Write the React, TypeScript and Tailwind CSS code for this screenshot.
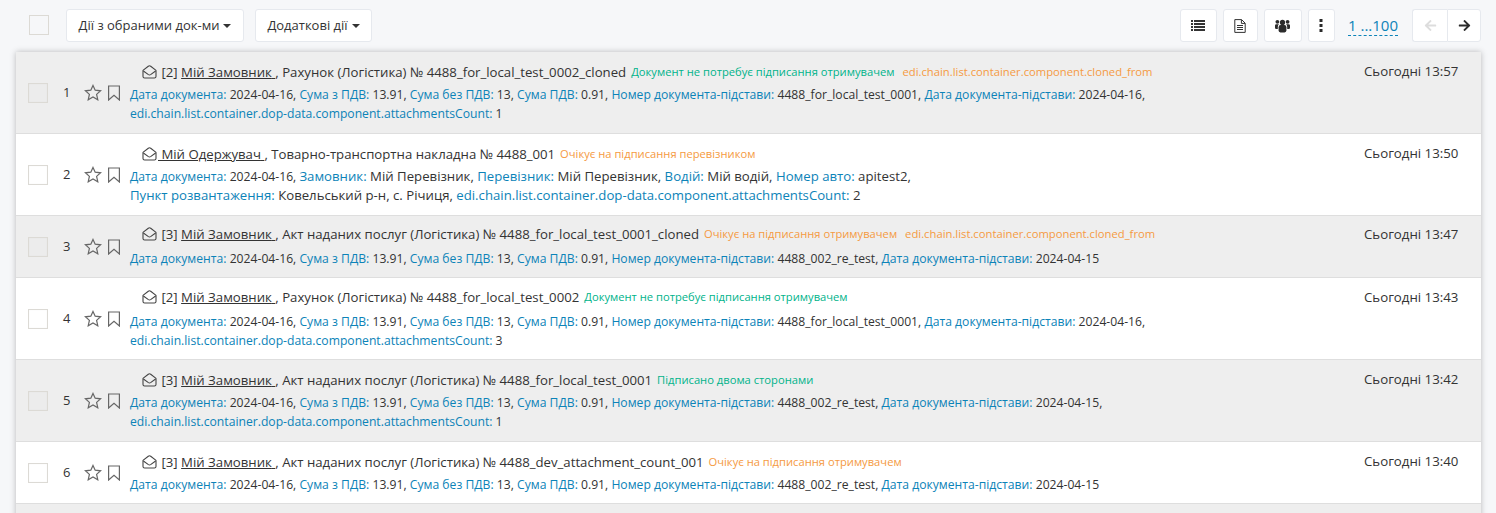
import React from "react";
import { FaArrowLeft, FaArrowRight } from "react-icons/fa";

const Blue = ({ children }: { children: React.ReactNode }) => <span className="text-[#0c83b8]">{children}</span>;

const Field = ({ k, v, last, big }: { k: string; v: string; last?: boolean; big?: boolean }) => (
  <span className={big ? "text-[13.2px]" : ""}>
    <Blue>{k}:</Blue> {v}
    {last ? "" : ", "}
  </span>
);

const Env = () => (
  <svg width="15" height="14" viewBox="0 0 15 14" fill="none" stroke="#444" strokeWidth="1.1" strokeLinejoin="round" className="shrink-0">
    <path d="M1 5.4 L6.3 1.2 Q7.5 .4 8.7 1.2 L14 5.4 V11.4 Q14 13 12.4 13 H2.6 Q1 13 1 11.4 Z" />
    <path d="M1.4 6 L6.4 9.6 Q7.5 10.3 8.6 9.6 L13.6 6" />
  </svg>
);

const Star = () => (
  <svg width="18" height="17" viewBox="0 0 18 17" fill="none" stroke="#666" strokeWidth="1.2" strokeLinejoin="miter">
    <path d="M9 1.4 L11.2 6.2 L16.6 6.8 L12.6 10.4 L13.8 15.7 L9 13 L4.2 15.7 L5.4 10.4 L1.4 6.8 L6.8 6.2 Z" />
  </svg>
);

const Mark = () => (
  <svg width="14" height="16" viewBox="0 0 14 16" fill="none" stroke="#666" strokeWidth="1.2" strokeLinejoin="miter">
    <path d="M1.6 1 H12.4 V15 L7 10.4 L1.6 15 Z" />
  </svg>
);

const FileIcon = () => (
  <svg width="12" height="14" viewBox="0 0 12 14" fill="none" stroke="#333" strokeWidth="1">
    <path d="M.8 .6 H7.6 L11.2 4.2 V13.4 H.8 Z" />
    <path d="M7.4 .8 V4.4 H11" />
    <path d="M3 6.5 H9 M3 8.5 H9 M3 10.5 H9" />
  </svg>
);

const ListIcon = () => (
  <svg width="14" height="11" viewBox="0 0 14 11" fill="#333">
    <path d="M0 0h2v2H0zM3 0h11v2H3zM0 3h2v2H0zM3 3h11v2H3zM0 6h2v2H0zM3 6h11v2H3zM0 9h2v2H0zM3 9h11v2H3z" />
  </svg>
);

const UsersIcon = () => (
  <svg width="15" height="14" viewBox="0 0 15 14" fill="#2b2b2b">
    <circle cx="7.5" cy="3.4" r="2.6" />
    <circle cx="2.4" cy="2.8" r="1.9" />
    <circle cx="12.6" cy="2.8" r="1.9" />
    <path d="M3.6 8.2 Q3.6 6 5.6 6 H9.4 Q11.4 6 11.4 8.2 V11.6 Q11.4 13.4 9.6 13.4 H5.4 Q3.6 13.4 3.6 11.6 Z" />
    <path d="M0 6.6 Q0 5.2 1.4 5.2 H4 Q2.8 6 2.8 8 V10 H1.2 Q0 10 0 8.8 Z" />
    <path d="M15 6.6 Q15 5.2 13.6 5.2 H11 Q12.2 6 12.2 8 V10 H13.8 Q15 10 15 8.8 Z" />
  </svg>
);

const DotsIcon = () => (
  <svg width="4" height="13" viewBox="0 0 4 13" fill="#2b2b2b">
    <path d="M.5 0h3v3h-3zM.5 5h3v3h-3zM.5 10h3v3h-3z" />
  </svg>
);

const Check = ({ dim }: { dim?: boolean }) => (
  <div className={`w-5 h-5 border border-[#dcdad5] shadow-[inset_0_0_1px_rgba(0,0,0,0.1)] ${dim ? "bg-[#ececec]" : "bg-white"}`} />
);

const DocLine = () => (
  <>
    <Field k="Дата документа" v="2024-04-16" />
    <Field k="Сума з ПДВ" v="13.91" />
    <Field k="Сума без ПДВ" v="13" />
    <Field k="Сума ПДВ" v="0.91" />
  </>
);

type R = {
  n: number;
  title: string;
  party: string;
  doc: string;
  status: string;
  color: string;
  extra?: boolean;
  tight?: boolean;
  lines: React.ReactNode[];
  time: string;
  h: string;
  head: string;
  timeTop: string;
};

const ATT = "edi.chain.list.container.dop-data.component.attachmentsCount";
const GREEN = "text-[#00b38a]";
const ORANGE = "text-[#f59a42]";

const rows: R[] = [
  {
    n: 1,
    title: "[2] ",
    party: "Мій Замовник",
    doc: ", Рахунок (Логістика) № 4488_for_local_test_0002_cloned",
    status: "Документ не потребує підписання отримувачем",
    color: GREEN,
    extra: true,
    lines: [
      <>
        <DocLine />
        <Field k="Номер документа-підстави" v="4488_for_local_test_0001" />
        <Field k="Дата документа-підстави" v="2024-04-16" />
      </>,
      <Field k={ATT} v="1" last />,
    ],
    time: "Сьогодні 13:57",
    h: "h-[81px]",
    head: "h-[33px] pt-[11px]",
    timeTop: "pt-[10px]",
  },
  {
    n: 2,
    title: "",
    party: "\u00a0Мій Одержувач",
    doc: ", Товарно-транспортна накладна № 4488_001",
    status: "Очікує на підписання перевізником",
    color: ORANGE,
    tight: true,
    lines: [
      <>
        <Field k="Дата документа" v="2024-04-16" />
        <Field big k="Замовник" v="Мій Перевізник" />
        <Field big k="Перевізник" v="Мій Перевізник" />
        <Field big k="Водій" v="Мій водій" />
        <Field big k="Номер авто" v="apitest2" />
      </>,
      <>
        <Field big k="Пункт розвантаження" v="Ковельський р-н, с. Річиця" />
        <Field big k={ATT} v="2" last />
      </>,
    ],
    time: "Сьогодні 13:50",
    h: "h-[81px]",
    head: "h-[33px] pt-[11px]",
    timeTop: "pt-[10px]",
  },
  {
    n: 3,
    title: "[3] ",
    party: "Мій Замовник",
    doc: ", Акт наданих послуг (Логістика) № 4488_for_local_test_0001_cloned",
    status: "Очікує на підписання отримувачем",
    color: ORANGE,
    extra: true,
    lines: [
      <>
        <DocLine />
        <Field k="Номер документа-підстави" v="4488_002_re_test" />
        <Field k="Дата документа-підстави" v="2024-04-15" last />
      </>,
    ],
    time: "Сьогодні 13:47",
    h: "h-[61px]",
    head: "h-[33px] pt-[9px]",
    timeTop: "pt-[9px]",
  },
  {
    n: 4,
    title: "[2] ",
    party: "Мій Замовник",
    doc: ", Рахунок (Логістика) № 4488_for_local_test_0002",
    status: "Документ не потребує підписання отримувачем",
    color: GREEN,
    lines: [
      <>
        <DocLine />
        <Field k="Номер документа-підстави" v="4488_for_local_test_0001" />
        <Field k="Дата документа-підстави" v="2024-04-16" />
      </>,
      <Field k={ATT} v="3" last />,
    ],
    time: "Сьогодні 13:43",
    h: "h-[81px]",
    head: "h-[34px] pt-[10px]",
    timeTop: "pt-[10px]",
  },
  {
    n: 5,
    title: "[3] ",
    party: "Мій Замовник",
    doc: ", Акт наданих послуг (Логістика) № 4488_for_local_test_0001",
    status: "Підписано двома сторонами",
    color: GREEN,
    lines: [
      <>
        <DocLine />
        <Field k="Номер документа-підстави" v="4488_002_re_test" />
        <Field k="Дата документа-підстави" v="2024-04-15" />
      </>,
      <Field k={ATT} v="1" last />,
    ],
    time: "Сьогодні 13:42",
    h: "h-[81px]",
    head: "h-[33px] pt-[11px]",
    timeTop: "pt-[10px]",
  },
  {
    n: 6,
    title: "[3] ",
    party: "Мій Замовник",
    doc: ", Акт наданих послуг (Логістика) № 4488_dev_attachment_count_001",
    status: "Очікує на підписання отримувачем",
    color: ORANGE,
    lines: [
      <>
        <DocLine />
        <Field k="Номер документа-підстави" v="4488_002_re_test" />
        <Field k="Дата документа-підстави" v="2024-04-15" last />
      </>,
    ],
    time: "Сьогодні 13:40",
    h: "h-[61px]",
    head: "h-[33px] pt-[11px]",
    timeTop: "pt-[10px]",
  },
];

const Btn = ({ children, className = "" }: { children: React.ReactNode; className?: string }) => (
  <div className={`h-[33px] flex items-center justify-center bg-white border border-[#e6e9ee] rounded-[3px] ${className}`}>{children}</div>
);

const Caret = () => <span className="ml-1 w-0 h-0 border-x-[4px] border-x-transparent border-t-[4px] border-t-[#333]" />;

function Row({ r }: { r: R }) {
  const odd = r.n % 2 === 1;
  return (
    <div className={`${r.h} flex border-b border-[#dedede] box-content ${odd ? "bg-[#eeeeee]" : "bg-white"}`}>
      <div className="w-[114px] shrink-0 flex items-center pl-[12px]">
        <Check dim={odd} />
        <span className="w-[20px] ml-[15px]">{r.n}</span>
        <span className="ml-[1px]"><Star /></span>
        <span className="ml-[5px]"><Mark /></span>
      </div>
      <div className="flex-1 min-w-0 flex flex-col">
        <div className={`${r.head} flex items-start pl-[12px] box-border`}>
          <div className="h-[18px] flex items-center">
            <Env />
            <span className={`${r.tight ? "ml-[1px]" : "ml-[4.5px]"} whitespace-pre text-[13.2px] leading-[18px]`}>
              {r.title}
              <span className="underline">{r.party}&nbsp;</span>
              {r.doc}
            </span>
            <span className={`ml-[5px] text-[11.2px] ${r.color}`}>{r.status}</span>
            {r.extra && <span className="ml-[8px] text-[11.25px] text-[#f59a42]">edi.chain.list.container.component.cloned_from</span>}
          </div>
        </div>
        <div className="text-[12.17px] leading-[19px] whitespace-pre-wrap">
          {r.lines.map((l, i) => (
            <div key={i} className="h-[19px]">{l}</div>
          ))}
        </div>
      </div>
      <div className={`w-[117px] shrink-0 ${r.timeTop} text-[13.25px] leading-[18px] whitespace-nowrap`}>{r.time}</div>
    </div>
  );
}

export default function App() {
  return (
    <div className="w-[1496px] h-[513px] overflow-hidden bg-[#f6f7f9] text-[13px] text-[#333] font-['Open_Sans',sans-serif]">
      <div className="h-[52px] pl-[29px] pr-[15px] pt-[9px] flex items-start">
        <div className="mt-[6px] w-[20px] h-[20px] border border-[#dcdad5] bg-[#f6f7f9]" />
        <Btn className="ml-[17px] w-[178px]">Дії з обраними док-ми<Caret /></Btn>
        <Btn className="ml-[11px] w-[117px]">Додаткові дії<Caret /></Btn>
        <div className="flex-1" />
        <Btn className="w-[37px]"><ListIcon /></Btn>
        <Btn className="ml-[6px] w-[35px]"><FileIcon /></Btn>
        <Btn className="ml-[6px] w-[38px]"><UsersIcon /></Btn>
        <Btn className="ml-[6px] w-[27px]"><DotsIcon /></Btn>
        <div className="ml-[13px] mr-[14px] h-[27px] pt-[4px] text-[15px] leading-[24px] text-[#0c83b8] border-b border-dashed border-[#0c83b8] whitespace-nowrap">1 ...100</div>
        <Btn className="w-[35px] rounded-r-none border-r-0"><FaArrowLeft className="text-[13px] text-[#dddddd]" /></Btn>
        <Btn className="w-[34px] rounded-l-none"><FaArrowRight className="text-[13px] text-[#2b2b2b]" /></Btn>
      </div>
      <div className="mx-[16px] w-[1465px] shadow-[0_0_6px_rgba(0,0,0,0.25)]">
        {rows.map((r) => (
          <Row key={r.n} r={r} />
        ))}
        <div className="h-[20px] bg-[#eeeeee]" />
      </div>
    </div>
  );
}
